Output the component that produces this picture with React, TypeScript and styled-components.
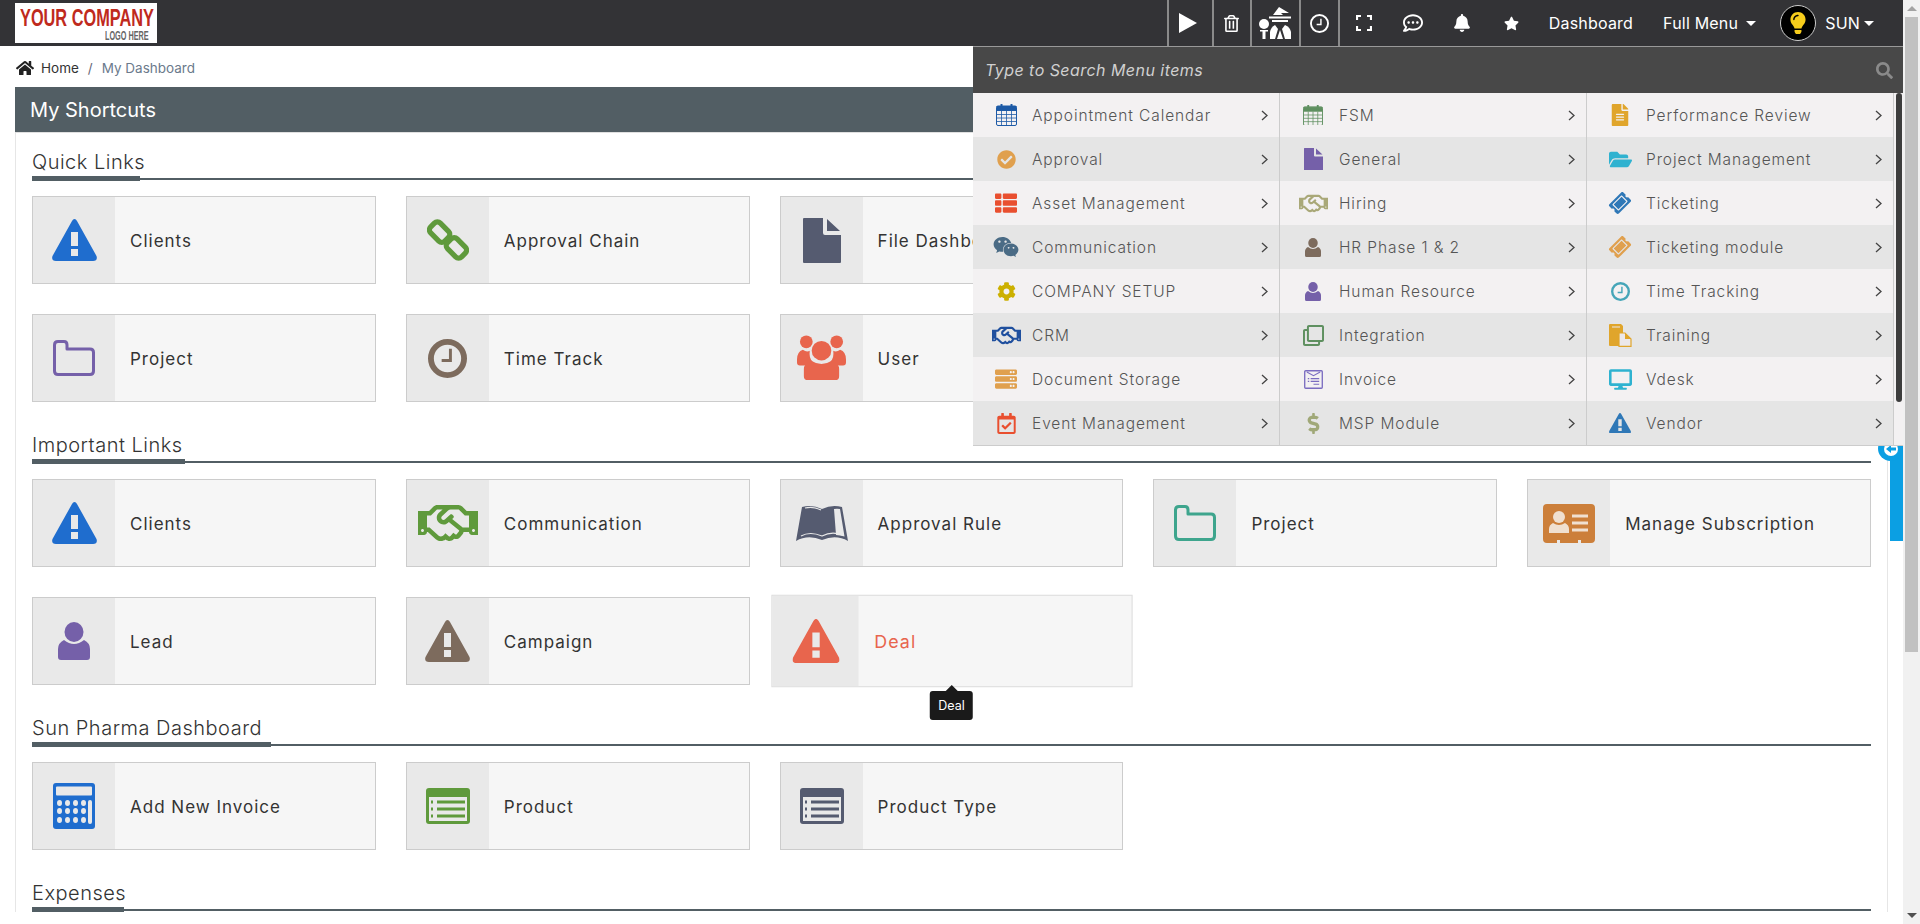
import React from "react";
import styled, { createGlobalStyle } from "styled-components";
import {
  FaBell, FaStar, FaHome, FaSearch, FaCheckCircle, FaThList, FaWeixin, FaCog, FaRegHandshake, FaServer,
  FaRegCalendarCheck, FaFileAlt, FaRegClone, FaDollarSign, FaFolderOpen, FaTicketAlt, FaDesktop,
  FaRegTrashAlt, FaRegCommentDots, FaLightbulb,
} from "react-icons/fa";

const BLUE = "#1f6dce";
const GREEN = "#5f9a3c";
const PURPLE = "#7560a9";
const BROWN = "#7d6b5d";
const CORAL = "#e8654d";
const SLATE = "#555b70";
const TEAL = "#3ea58d";
const ORANGE = "#cc7f3a";
const AMBER = "#e0a04e";

const GlobalStyle = createGlobalStyle`
  html, body { margin: 0; padding: 0; height: 100%; overflow: hidden; background: #fff; }
  body { font-family: Inter, "Open Sans", "Liberation Sans", sans-serif; color: #333; }
  * { box-sizing: border-box; }
`;

type IP = { c: string; w: number; h?: number };

const Warn = ({ c, w }: IP) => (
  <svg width={w} height={w * 42 / 45} viewBox="0 0 45 42">
    <path fillRule="evenodd" fill={c} d="M22.5 0 Q24 0 25 2 L44.5 37 Q46 42 41 42 H4 Q-1 42 .5 37 L20 2 Q21 0 22.5 0Z M19 13 V27 H26 V13Z M19 30 V37 H26 V30Z" />
  </svg>
);
const Chain = ({ c, w }: IP) => (
  <svg width={w} height={w} viewBox="0 0 40 40" fill="none" stroke={c} strokeWidth="5">
    <rect x="2.500" y="6" width="19" height="13" rx="4" transform="rotate(45 12 12.5)" />
    <rect x="18.500" y="21" width="19" height="13" rx="4" transform="rotate(45 28 27.5)" />
    <path d="M18 18 L22 22" strokeWidth="3" />
  </svg>
);
const Doc = ({ c, w }: IP) => (
  <svg width={w} height={w * 45 / 38} viewBox="0 0 38 45">
    <path fill={c} d="M1 0 H20 V15 Q20 17 22 17 H38 V44 Q38 45 37 45 H1 Q0 45 0 44 V1 Q0 0 1 0Z M24 1 L37 13 H24Z" />
  </svg>
);
const Folder = ({ c, w }: IP) => (
  <svg width={w} height={w * 36 / 42} viewBox="0 0 42 36" fill="none" stroke={c} strokeWidth="3">
    <path d="M5 1.5 H11 Q14 1.5 14 5 V9 H37 Q40.5 9 40.5 12.5 V31 Q40.5 34.5 37 34.5 H5 Q1.5 34.5 1.5 31 V5 Q1.5 1.5 5 1.5Z" strokeLinejoin="round" />
  </svg>
);
const Ring = ({ c, w, h = 6 }: IP) => (
  <svg width={w} height={w} viewBox="0 0 40 40" fill="none" stroke={c}>
    <circle cx="20" cy="20" r={20 - h / 2} strokeWidth={h} />
    <path d="M23 10 V22 H14" strokeWidth="3" />
  </svg>
);
const Users = ({ c, w }: IP) => (
  <svg width={w} height={w * 46 / 50} viewBox="0 0 50 46" fill={c}>
    <circle cx="9.5" cy="7" r="6.5" />
    <circle cx="40.5" cy="7" r="6.5" />
    <path d="M0 25 Q0 17 6 15 Q10 18 13 16 Q12 24 16 27 L10 31 H3 Q0 31 0 28Z" />
    <path d="M50 25 Q50 17 44 15 Q40 18 37 16 Q38 24 34 27 L40 31 H47 Q50 31 50 28Z" />
    <circle cx="25" cy="16" r="10" />
    <path d="M7 42 V35 Q7 29 14 26 Q25 33 36 26 Q43 29 43 35 V42 Q43 46 39 46 H11 Q7 46 7 42Z" />
  </svg>
);
const Person = ({ c, w }: IP) => (
  <svg width={w} height={w * 38 / 32} viewBox="0 0 32 38" fill={c}>
    <ellipse cx="16" cy="10" rx="9.5" ry="10" />
    <path d="M0 35 V27 Q0 21 6 18 Q16 26 26 18 Q32 21 32 27 V35 Q32 38 29 38 H3 Q0 38 0 35Z" />
  </svg>
);
const Book = ({ c, w }: IP) => (
  <svg width={w} height={w * 36 / 52} viewBox="0 0 52 36">
    <path fill={c} d="M6 2 Q16 -1 26 4 Q36 -1 46 2 L52 36 Q40 29 26 35 Q12 29 0 36Z" />
    <path fill="#e9e9e9" d="M38 4 Q41 3.500 44 4 L48.500 31.500 Q44 30 40 30Z" />
    <path fill="none" stroke="#e9e9e9" strokeWidth="1.200" d="M5 31 Q14 26 26 31 Q36 26 46 30 M9 3 Q17 1 25 5" />
  </svg>
);
const IdCard = ({ c, w }: IP) => (
  <svg width={w} height={w * 39 / 52} viewBox="0 0 52 39">
    <path fill={c} d="M4 0 H48 Q52 0 52 4 V35 Q52 39 48 39 H38 V36 H35 V39 H17 V36 H14 V39 H4 Q0 39 0 35 V4 Q0 0 4 0Z" />
    <circle cx="16" cy="13" r="6" fill="#f0e0d0" />
    <path fill="#f0e0d0" d="M6 29 V25 Q6 21 10 19 Q16 23 22 19 Q26 21 26 25 V29Z" />
    <path stroke="#f0e0d0" strokeWidth="3" d="M29 12 H45 M29 19 H45 M29 26 H45" />
  </svg>
);
const Calc = ({ c, w }: IP) => (
  <svg width={w} height={w * 46 / 42} viewBox="0 0 42 46">
    <rect width="42" height="46" rx="3" fill={c} />
    <rect x="3" y="3.500" width="36" height="9" rx="1" fill="#e9e9e9" />
    {[4, 12, 20, 28].flatMap((x) => [20, 28, 37].map((y) => (
      <ellipse key={x + "-" + y} cx={x + 2.5} cy={y} rx="2.500" ry="3" fill="#e9e9e9" />
    )))}
    <rect x="35" y="17" width="4" height="24" rx="2" fill="#e9e9e9" />
  </svg>
);
const ListAlt = ({ c, w }: IP) => (
  <svg width={w} height={w * 36 / 44} viewBox="0 0 44 36">
    <rect width="44" height="36" rx="3" fill={c} />
    <rect x="3" y="9" width="38" height="24" fill="#e9e9e9" />
    <path stroke={c} strokeWidth="3" d="M5 14 H7 M11 14 H39 M5 21 H7 M11 21 H39 M5 28 H7 M11 28 H39" />
  </svg>
);
const Cal = ({ c, w }: IP) => (
  <svg width={w} height={w * 22 / 21} viewBox="0 0 21 22" fill="none" stroke={c}>
    <rect x=".5" y="2" width="20" height="19.500" rx="1.500" />
    <rect x="1" y="2.500" width="19" height="4" fill={c} />
    <path d="M5.500 .5 V4 M15.500 .5 V4" strokeWidth="2" strokeLinecap="round" />
    <path strokeWidth=".8" d="M1 10.500 H20 M1 14 H20 M1 17.500 H20 M5.500 7 V21 M10.500 7 V21 M15.500 7 V21" />
  </svg>
);
const Invoice = ({ c, w }: IP) => (
  <svg width={w} height={w} viewBox="0 0 20 20" fill="none" stroke={c}>
    <rect x=".75" y=".75" width="18.500" height="18.500" rx="1" strokeWidth="1.400" />
    <path d="M3 2 L10 6 L17 2" strokeWidth="1.200" />
    <path d="M4 9 H5.500 M7 9 H16 M4 12 H5.500 M7 12 H16 M10 15 H16" strokeWidth="1.300" />
  </svg>
);
const Training = ({ c, w }: IP) => (
  <svg width={w} height={w} viewBox="0 0 23 23">
    <path fill={c} d="M0 1 Q0 0 1 0 H12 L14 2 V22 H1 Q0 22 0 21Z" />
    <path fill="#ece8ea" stroke={c} strokeWidth="1.200" d="M10 9 H16 L22 15 V22.400 H10Z" />
    <path fill={c} d="M16 9 L22 15 H16Z" />
    <path stroke="#ece8ea" d="M3 3 H11" />
  </svg>
);
const Tilted = styled.span`
  display: inline-flex;
  transform: rotate(-45deg);
`;

type MenuItem = { label: string; icon: React.ReactNode };
const col1: MenuItem[] = [
  { label: "Appointment Calendar", icon: <Cal c="#1d5aa6" w={21} /> },
  { label: "Approval", icon: <FaCheckCircle color={AMBER} size={19} /> },
  { label: "Asset Management", icon: <FaThList color="#e94f2f" size={22} /> },
  { label: "Communication", icon: <FaWeixin color="#4a6b85" size={26} /> },
  { label: "COMPANY SETUP", icon: <FaCog color="#ccb000" size={19} /> },
  { label: "CRM", icon: <FaRegHandshake color="#1f4f9e" size={29} /> },
  { label: "Document Storage", icon: <FaServer color={AMBER} size={22} /> },
  { label: "Event Management", icon: <FaRegCalendarCheck color="#e94f2f" size={21} /> },
];
const col2: MenuItem[] = [
  { label: "FSM", icon: <Cal c="#5f9060" w={20} /> },
  { label: "General", icon: <Doc c={PURPLE} w={19} /> },
  { label: "Hiring", icon: <FaRegHandshake color="#a9a878" size={29} /> },
  { label: "HR Phase 1 & 2", icon: <Person c={BROWN} w={16} /> },
  { label: "Human Resource", icon: <Person c={PURPLE} w={16} /> },
  { label: "Integration", icon: <FaRegClone color="#5f9060" size={21} /> },
  { label: "Invoice", icon: <Invoice c="#7a6cc0" w={19} /> },
  { label: "MSP Module", icon: <FaDollarSign color="#a0a878" size={21} /> },
];
const col3: MenuItem[] = [
  { label: "Performance Review", icon: <FaFileAlt color="#e0a52b" size={22} /> },
  { label: "Project Management", icon: <FaFolderOpen color="#2fb2d0" size={23} /> },
  { label: "Ticketing", icon: <Tilted><FaTicketAlt color="#2f78b7" size={20} /></Tilted> },
  { label: "Ticketing module", icon: <Tilted><FaTicketAlt color={AMBER} size={20} /></Tilted> },
  { label: "Time Tracking", icon: <Ring c="#45a5b8" w={19} h={5} /> },
  { label: "Training", icon: <Training c="#e0a52b" w={23} /> },
  { label: "Vdesk", icon: <FaDesktop color="#2fb2d0" size={23} /> },
  { label: "Vendor", icon: <Warn c="#2f78b7" w={22} /> },
];

type CardItem = { label: string; icon?: React.ReactNode; hovered?: boolean };
type Sect = { title: string; w: number; cards: CardItem[] };
const sections: Sect[] = [
  {
    title: "Quick Links",
    w: 108,
    cards: [
      { label: "Clients", icon: <Warn c={BLUE} w={45} /> },
      { label: "Approval Chain", icon: <Chain c={GREEN} w={42} /> },
      { label: "File Dashboard", icon: <Doc c={SLATE} w={38} /> },
      { label: "" },
      { label: "" },
      { label: "Project", icon: <Folder c={PURPLE} w={42} /> },
      { label: "Time Track", icon: <Ring c={BROWN} w={39} h={6} /> },
      { label: "User", icon: <Users c={CORAL} w={49} /> },
    ],
  },
  {
    title: "Important Links",
    w: 153,
    cards: [
      { label: "Clients", icon: <Warn c={BLUE} w={45} /> },
      { label: "Communication", icon: <FaRegHandshake color={GREEN} size={60} /> },
      { label: "Approval Rule", icon: <Book c={SLATE} w={52} /> },
      { label: "Project", icon: <Folder c={TEAL} w={42} /> },
      { label: "Manage Subscription", icon: <IdCard c={ORANGE} w={52} /> },
      { label: "Lead", icon: <Person c={PURPLE} w={32} /> },
      { label: "Campaign", icon: <Warn c={BROWN} w={45} /> },
      { label: "Deal", icon: <Warn c={CORAL} w={45} />, hovered: true },
    ],
  },
  {
    title: "Sun Pharma Dashboard",
    w: 239,
    cards: [
      { label: "Add New Invoice", icon: <Calc c={BLUE} w={42} /> },
      { label: "Product", icon: <ListAlt c={GREEN} w={44} /> },
      { label: "Product Type", icon: <ListAlt c={SLATE} w={44} /> },
    ],
  },
  { title: "Expenses", w: 92, cards: [] },
];

const Shell = styled.div`
  position: relative;
  display: flex;
  width: 1920px;
  height: 924px;
  overflow: hidden;
`;
const Main = styled.div`
  width: 1903px;
  flex: none;
`;
const PageScroll = styled.div`
  width: 17px;
  flex: none;
  background: #f1f1f1;
  display: flex;
  flex-direction: column;
  align-items: center;
`;
const ScrollUp = styled.div`
  width: 0;
  height: 0;
  margin: 6px 0 6px;
  border-left: 5px solid transparent;
  border-right: 5px solid transparent;
  border-bottom: 5px solid #a3a3a3;
`;
const ScrollThumb = styled.div`
  width: 13px;
  height: 635px;
  background: #c1c1c1;
`;
const ScrollDown = styled.div`
  width: 0;
  height: 0;
  margin-top: auto;
  margin-bottom: 6px;
  border-left: 5px solid transparent;
  border-right: 5px solid transparent;
  border-top: 5px solid #505050;
`;
const Header = styled.header`
  height: 46px;
  background: #333336;
  display: flex;
  align-items: stretch;
  padding-left: 15px;
  color: #fff;
`;
const Logo = styled.div`
  width: 142px;
  height: 40px;
  margin-top: 3px;
  background: #fff;
  overflow: hidden;
  font-family: "Liberation Sans", sans-serif;
  font-weight: 700;
`;
const LogoMain = styled.div`
  color: #bf2a1d;
  font-size: 24px;
  line-height: 24px;
  margin: 3px 0 0 5px;
  white-space: nowrap;
  transform: scaleX(0.68);
  transform-origin: left center;
`;
const LogoSub = styled.div`
  color: #666;
  font-size: 13px;
  line-height: 11px;
  margin-left: 90px;
  white-space: nowrap;
  transform: scaleX(0.56);
  transform-origin: left center;
`;
const HeaderRight = styled.div`
  margin-left: auto;
  display: flex;
  align-items: stretch;
`;
const BoxedCell = styled.div<{ $w: number; $pr?: number }>`
  width: ${(p) => p.$w}px;
  padding-right: ${(p) => p.$pr ?? 0}px;
  border-left: 2px solid #8a8a8a;
  display: flex;
  align-items: center;
  justify-content: center;
`;
const PlainCell = styled.div<{ $w?: number }>`
  width: ${(p) => p.$w ?? 49}px;
  display: flex;
  align-items: center;
  justify-content: center;
`;
const FirstPlain = styled(PlainCell)`
  border-left: 2px solid #8a8a8a;
`;
const NavText = styled.div<{ $ml: number }>`
  display: flex;
  align-items: center;
  margin-left: ${(p) => p.$ml}px;
  font-size: 16px;
  letter-spacing: 0.2px;
  white-space: nowrap;
`;
const Caret = styled.span<{ $ml: number }>`
  display: inline-block;
  width: 0;
  height: 0;
  margin-left: ${(p) => p.$ml}px;
  border-left: 5px solid transparent;
  border-right: 5px solid transparent;
  border-top: 5px solid #fff;
`;
const Avatar = styled.div`
  width: 36px;
  height: 36px;
  margin: 5px 0 0 24px;
  border-radius: 50%;
  background: #000;
  border: 1px solid #ccc;
  display: flex;
  align-items: center;
  justify-content: center;
`;
const UserName = styled(NavText)`
  padding-right: 29px;
`;
const Crumbs = styled.nav`
  height: 41px;
  padding: 2px 0 0 16px;
  display: flex;
  align-items: center;
  font-size: 13.500px;
`;
const CrumbHome = styled.span`
  margin-left: 7px;
  color: #333;
`;
const CrumbSep = styled.span`
  margin: 0 9px;
  color: #667;
`;
const CrumbCurrent = styled.span`
  color: #6b7a8c;
`;
const Panel = styled.section`
  margin: 0 15px;
  border-left: 1px solid #e6e6e6;
  border-right: 1px solid #e6e6e6;
`;
const PanelTitle = styled.h1`
  margin: 0 -1px;
  height: 46px;
  background: #525e64;
  color: #fff;
  padding: 1px 0 0 15px;
  display: flex;
  align-items: center;
  font-size: 20px;
  font-weight: 400;
  border-bottom: 1px solid #e0e0e0;
`;
const PanelBody = styled.div`
  padding: 12px 16px 0;
`;
const Section = styled.div`
  margin-bottom: 26px;
`;
const SectionHead = styled.div`
  display: flex;
  height: 36px;
`;
const SectionTitle = styled.h2<{ $w: number }>`
  margin: 0;
  width: ${(p) => p.$w}px;
  padding-top: 4px;
  font-size: 20px;
  font-weight: 300;
  letter-spacing: 0.5px;
  color: #333;
  line-height: 27px;
  height: 36px;
  border-bottom: 5px solid #525e64;
  white-space: nowrap;
`;
const SectionRule = styled.div`
  flex: 1;
  height: 2px;
  margin-top: 33px;
  background: #525e64;
`;
const CardGrid = styled.div`
  display: grid;
  grid-template-columns: repeat(5, 1fr);
  gap: 30px;
  margin-top: 15px;
`;
const CardSlot = styled.div`
  position: relative;
  z-index: 1;
  height: 88px;
`;
const Card = styled.div<{ $hovered?: boolean }>`
  height: 88px;
  display: flex;
  background: #f6f6f6;
  border: 1px solid ${(p) => (p.$hovered ? "#dedede" : "#ccc")};
  transform: ${(p) => (p.$hovered ? "scale(1.05)" : "none")};
`;
const CardIcon = styled.div`
  width: 82px;
  flex: none;
  background: #e9e9e9;
  display: flex;
  align-items: center;
  justify-content: center;
`;
const CardLabel = styled.div<{ $hovered?: boolean }>`
  padding: 2px 0 0 15px;
  display: flex;
  align-items: center;
  font-size: 17px;
  letter-spacing: 1px;
  color: ${(p) => (p.$hovered ? CORAL : "#333")};
  white-space: nowrap;
`;
const Tooltip = styled.div`
  position: absolute;
  left: 50%;
  top: calc(100% + 6px);
  transform: translateX(-50%);
  background: #1a1a1a;
  color: #fff;
  font-size: 12.500px;
  line-height: 29px;
  padding: 0 8px;
  border-radius: 3px;
  &::before {
    content: "";
    position: absolute;
    left: 50%;
    top: -6px;
    margin-left: -6px;
    border-left: 6px solid transparent;
    border-right: 6px solid transparent;
    border-bottom: 6px solid #1a1a1a;
  }
`;
const HelpTab = styled.div`
  position: absolute;
  left: 1890px;
  top: 440px;
  width: 13px;
  height: 101px;
  background: #0b9fe3;
  z-index: 2;
`;
const HelpBubble = styled.div`
  position: absolute;
  left: -12px;
  top: -4px;
  width: 25px;
  height: 25px;
  border-radius: 50%;
  background: #0b9fe3;
  display: flex;
  align-items: center;
  justify-content: center;
`;
const HelpDot = styled.div`
  width: 14px;
  height: 14px;
  border-radius: 50%;
  background: #fff;
  display: flex;
  align-items: center;
  justify-content: center;
`;
const Menu = styled.div`
  position: absolute;
  left: 973px;
  top: 46px;
  width: 930px;
  z-index: 3;
  background: #f3f1f2;
  border-bottom: 1px solid #ccc;
`;
const MenuSearch = styled.div`
  height: 47px;
  border-top: 1px solid #999;
  background: #484848;
  display: flex;
  align-items: center;
  justify-content: space-between;
  padding: 0 10px 0 12px;
  color: #d0d0d0;
  font-size: 16px;
  letter-spacing: 0.45px;
  font-style: italic;
`;
const MenuBody = styled.div`
  display: flex;
`;
const MenuCol = styled.div`
  width: 307px;
  border-right: 1px solid #ccc;
`;
const MenuRow = styled.div`
  height: 44px;
  display: flex;
  align-items: center;
  color: #555;
  font-size: 15.500px;
  letter-spacing: 0.9px;
  font-weight: 300;
  white-space: nowrap;
  background: #f3f1f2;
  &:nth-child(even) { background: #e5e5e5; }
`;
const MenuIconBox = styled.div`
  width: 59px;
  padding-left: 7px;
  flex: none;
  display: flex;
  justify-content: center;
  align-items: center;
`;
const MenuChevron = styled.svg`
  margin-left: auto;
  margin-right: 11px;
`;
const MenuScroll = styled.div`
  flex: 1;
  padding-left: 2px;
`;
const MenuThumb = styled.div`
  width: 6px;
  height: 309px;
  background: #3d3d3d;
  border-radius: 3px;
`;

const Chevron = () => (
  <MenuChevron width="7" height="11" viewBox="0 0 7 11" fill="none" stroke="#444" strokeWidth="1.300">
    <path d="M1 1 L6 5.500 L1 10" />
  </MenuChevron>
);

const WizardIcon = () => (
  <svg width="33" height="32" viewBox="0 0 33 32" fill="#fff">
    <path d="M20 0 L30 6 H22 L24 8 H14Z" />
    <rect x="10" y="9.500" width="22" height="2" />
    <rect x="13" y="13" width="16" height="2" />
    <circle cx="5" cy="17" r="5" />
    <rect x="3.500" y="23" width="3" height="9" />
    <rect x="1" y="23" width="8" height="1.500" />
    <path d="M11 32 V25 Q12 20 16 18 L19 22 L16 32Z" />
    <path d="M32 32 V25 Q31 20 26 18 L23 22 L26 32Z" />
    <path d="M21 23 L24 32 H18Z" />
  </svg>
);
const FullScreen = () => (
  <svg width="16" height="16" viewBox="0 0 16 16" fill="none" stroke="#fff" strokeWidth="2.200">
    <path d="M1 5 V1 H5 M11 1 H15 V5 M15 11 V15 H11 M5 15 H1 V11" />
  </svg>
);

export default function App() {
  return (
    <>
      <GlobalStyle />
      <Shell>
        <Main>
          <Header>
            <Logo>
              <LogoMain>YOUR COMPANY</LogoMain>
              <LogoSub>LOGO HERE</LogoSub>
            </Logo>
            <HeaderRight>
              <BoxedCell $w={45} $pr={4}>
                <svg width="18" height="20" viewBox="0 0 18 20"><path fill="#fff" d="M0 0 L18 10 L0 20Z" /></svg>
              </BoxedCell>
              <BoxedCell $w={38}><FaRegTrashAlt color="#fff" size={17} /></BoxedCell>
              <BoxedCell $w={49}><WizardIcon /></BoxedCell>
              <BoxedCell $w={39}><Ring c="#fff" w={19} h={4} /></BoxedCell>
              <FirstPlain $w={51}><FullScreen /></FirstPlain>
              <PlainCell><FaRegCommentDots color="#fff" size={20} /></PlainCell>
              <PlainCell><FaBell color="#fff" size={18} /></PlainCell>
              <PlainCell><FaStar color="#fff" size={15} /></PlainCell>
              <NavText $ml={13}>Dashboard</NavText>
              <NavText $ml={30}>Full Menu<Caret $ml={8} /></NavText>
              <Avatar><FaLightbulb color="#f6cc1c" size={22} /></Avatar>
              <UserName $ml={9}>SUN<Caret $ml={4} /></UserName>
            </HeaderRight>
          </Header>
          <Crumbs>
            <FaHome color="#222" size={18} />
            <CrumbHome>Home</CrumbHome>
            <CrumbSep>/</CrumbSep>
            <CrumbCurrent>My Dashboard</CrumbCurrent>
          </Crumbs>
          <Panel>
            <PanelTitle>My Shortcuts</PanelTitle>
            <PanelBody>
              {sections.map((s) => (
                <Section key={s.title}>
                  <SectionHead>
                    <SectionTitle $w={s.w}>{s.title}</SectionTitle>
                    <SectionRule />
                  </SectionHead>
                  {s.cards.length > 0 && (
                    <CardGrid>
                      {s.cards.map((c, i) => (
                        <CardSlot key={i}>
                          {c.icon && (
                            <Card $hovered={c.hovered}>
                              <CardIcon>{c.icon}</CardIcon>
                              <CardLabel $hovered={c.hovered}>{c.label}</CardLabel>
                            </Card>
                          )}
                          {c.hovered && <Tooltip>{c.label}</Tooltip>}
                        </CardSlot>
                      ))}
                    </CardGrid>
                  )}
                </Section>
              ))}
            </PanelBody>
          </Panel>
        </Main>
        <PageScroll>
          <ScrollUp />
          <ScrollThumb />
          <ScrollDown />
        </PageScroll>
        <HelpTab>
          <HelpBubble>
            <HelpDot>
              <svg width="10" height="10" viewBox="0 0 10 10" fill="#0b9fe3"><path d="M0 5 L5 1 V3.500 H10 V6.500 H5 V9Z" /></svg>
            </HelpDot>
          </HelpBubble>
        </HelpTab>
        <Menu>
          <MenuSearch>
            <span>Type to Search Menu items</span>
            <FaSearch color="#8a8a8a" size={17} />
          </MenuSearch>
          <MenuBody>
            {[col1, col2, col3].map((col, i) => (
              <MenuCol key={i}>
                {col.map((m) => (
                  <MenuRow key={m.label}>
                    <MenuIconBox>{m.icon}</MenuIconBox>
                    {m.label}
                    <Chevron />
                  </MenuRow>
                ))}
              </MenuCol>
            ))}
            <MenuScroll><MenuThumb /></MenuScroll>
          </MenuBody>
        </Menu>
      </Shell>
    </>
  );
}
